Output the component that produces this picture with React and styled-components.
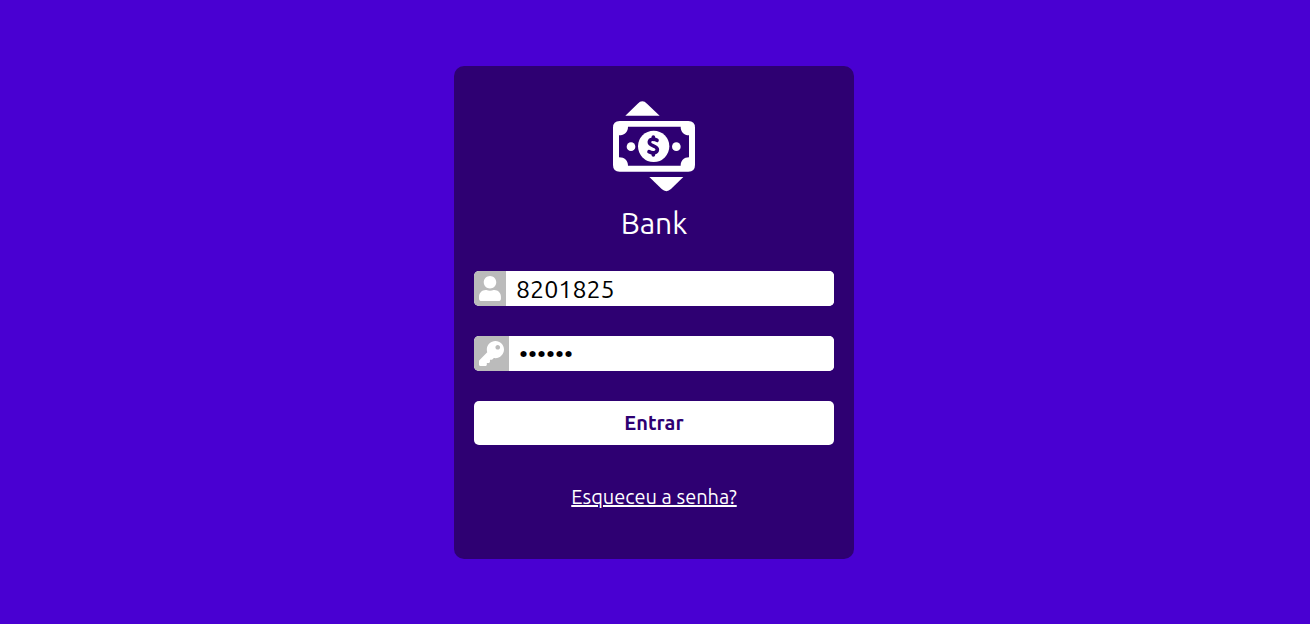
import React from "react";
import styled, { createGlobalStyle } from "styled-components";
import { FaUser, FaKey } from "react-icons/fa";

const GlobalStyle = createGlobalStyle`
  * { box-sizing: border-box; margin: 0; padding: 0; }
  body { background: #4900d2; font-family: Ubuntu, "Noto Sans", sans-serif; }
  button, input { font-family: inherit; border: 0; }
`;

const Page = styled.main`
  min-height: 100vh;
  padding-right: 2px;
  display: flex;
  align-items: center;
  justify-content: center;
`;

const Card = styled.form`
  width: 100%;
  max-width: 400px;
  padding: 34px 20px 48px;
  border-radius: 10px;
  background: #2e0072;
  color: #fff;
  display: flex;
  flex-direction: column;
  align-items: center;
`;

const Logo = styled.svg`
  width: 82px;
  height: 92px;
  fill: #fff;
`;

const Title = styled.h1`
  margin: 12px 0 28px;
  font-size: 30px;
  line-height: 39px;
  font-weight: 400;
`;

const Field = styled.div`
  width: 100%;
  height: 35px;
  margin-bottom: 30px;
  display: flex;
  border-radius: 5px;
  overflow: hidden;
  background: #fff;
`;

const FieldIcon = styled.label`
  display: flex;
  align-items: center;
  padding: 5px;
  background: #bbb;
  color: #fff;

  svg {
    width: ${({ $iconWidth }) => $iconWidth}px;
    height: 25px;
  }
`;

const Input = styled.input`
  flex: 1;
  min-width: 0;
  padding: 2px 10px 0;
  background: #fff;
  color: #000;
  font-size: 25px;
  outline: 0;
`;

const Submit = styled.button`
  width: 100%;
  height: 44px;
  border-radius: 5px;
  background: #fff;
  color: #2e0072;
  font-size: 20px;
  font-weight: 700;
  cursor: pointer;
`;

const ForgotLink = styled.a`
  margin-top: 38px;
  color: #fff;
  font-size: 20px;
  line-height: 28px;
`;

function BankLogo() {
  return (
    <Logo viewBox="0 0 246 276" aria-hidden="true">
      <path d="M37 47 74 11Q88-3 102 11L140 47Z" />
      <path d="M109 231H211L174 267Q160 280 146 267Z" />
      <path
        fillRule="evenodd"
        d="M20 63H226Q246 63 246 83V195Q246 215 226 215H20Q0 215 0 195V83Q0 63 20 63ZM45 80C45 96 35 106 18 106V172C35 172 45 182 45 197H203C203 182 213 172 228 172V106C213 106 203 96 203 80Z"
      />
      <circle cx="54" cy="140" r="13" />
      <circle cx="190" cy="140" r="13" />
      <circle cx="122" cy="139" r="47" />
      <g fill="none" stroke="#2e0072" strokeWidth="11" strokeLinecap="round">
        <path d="M121 111V118M121 159V165" />
        <path d="M132 121C125 116 110 116 109 126C108 139 134 136 133 149C132 161 116 160 108 155" />
      </g>
    </Logo>
  );
}

export default function App() {
  return (
    <>
      <GlobalStyle />
      <Page>
        <Card onSubmit={(e) => e.preventDefault()}>
          <BankLogo />
          <Title>Bank</Title>
          <Field>
            <FieldIcon htmlFor="account" aria-label="Conta" $iconWidth={22}>
              <FaUser />
            </FieldIcon>
            <Input id="account" type="text" defaultValue="8201825" />
          </Field>
          <Field>
            <FieldIcon htmlFor="password" aria-label="Senha" $iconWidth={25}>
              <FaKey />
            </FieldIcon>
            <Input id="password" type="password" defaultValue="123456" />
          </Field>
          <Submit type="submit">Entrar</Submit>
          <ForgotLink href="#senha">Esqueceu a senha?</ForgotLink>
        </Card>
      </Page>
    </>
  );
}
